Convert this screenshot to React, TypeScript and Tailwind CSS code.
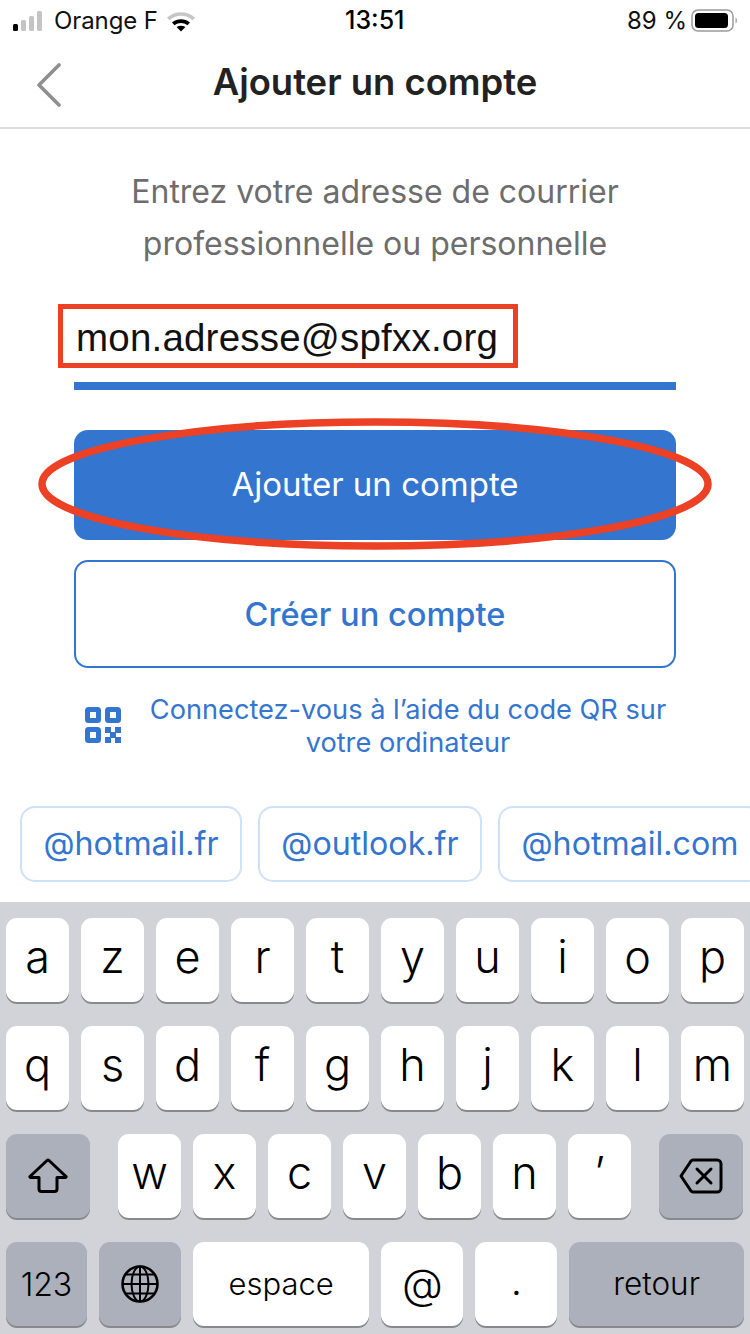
import React from 'react';

const font = "font-['Inter','Liberation_Sans',sans-serif]";

const SignalBars = () => (
  <svg width="36" height="20" viewBox="0 0 36 20" className="block">
    <rect x="0" y="13" width="5" height="7" rx="1.5" fill="#000" />
    <rect x="8" y="9" width="5" height="11" rx="1.5" fill="#c4c4c4" />
    <rect x="16" y="5" width="5" height="15" rx="1.5" fill="#c4c4c4" />
    <rect x="24" y="0" width="5" height="20" rx="1.5" fill="#c4c4c4" />
  </svg>
);

const Wifi = () => (
  <svg width="30" height="22" viewBox="0 0 30 22" className="block">
    <path d="M1 7.5 C9 0.5 21 0.5 29 7.5 L26.4 10.2 C19.5 4.4 10.5 4.4 3.6 10.2 Z" fill="#c6c6c6" />
    <path d="M6 12.6 C11.5 8.2 18.5 8.2 24 12.6 L21.4 15.2 C17.4 12.2 12.6 12.2 8.6 15.2 Z" fill="#000" />
    <path d="M10.6 17 C13.4 15.2 16.6 15.2 19.4 17 L15 21.6 Z" fill="#000" />
  </svg>
);

const Battery = () => (
  <svg width="48" height="24" viewBox="0 0 48 24" className="block">
    <rect x="1" y="1" width="41" height="21" rx="6" fill="none" stroke="#9a9a9a" strokeWidth="1.5" />
    <rect x="4" y="4" width="33" height="15" rx="3.5" fill="#000" />
    <path d="M44.5 8.5 C46.5 9.5 46.5 13.5 44.5 14.5 Z" fill="#a5a5a5" />
  </svg>
);

const QrIcon = () => (
  <svg width="36" height="36" viewBox="0 0 36 36" className="block">
    <g fill="#3375cf">
      <path fillRule="evenodd" d="M3.5 0 H12.5 A3.5 3.5 0 0 1 16 3.5 V12.5 A3.5 3.5 0 0 1 12.5 16 H3.5 A3.5 3.5 0 0 1 0 12.5 V3.5 A3.5 3.5 0 0 1 3.5 0 Z M5 5 V11 H11 V5 Z" />
      <path fillRule="evenodd" d="M23.5 0 H32.5 A3.5 3.5 0 0 1 36 3.5 V12.5 A3.5 3.5 0 0 1 32.5 16 H23.5 A3.5 3.5 0 0 1 20 12.5 V3.5 A3.5 3.5 0 0 1 23.5 0 Z M25 5 V11 H31 V5 Z" />
      <path fillRule="evenodd" d="M3.5 20 H12.5 A3.5 3.5 0 0 1 16 23.5 V32.5 A3.5 3.5 0 0 1 12.5 36 H3.5 A3.5 3.5 0 0 1 0 32.5 V23.5 A3.5 3.5 0 0 1 3.5 20 Z M5 25 V31 H11 V25 Z" />
      <rect x="20" y="20" width="6" height="6" />
      <rect x="30" y="20" width="6" height="6" />
      <rect x="25" y="25" width="6" height="6" />
      <rect x="20" y="30" width="6" height="6" />
      <rect x="30" y="30" width="6" height="6" />
    </g>
  </svg>
);

const ShiftIcon = () => (
  <svg width="42" height="36" viewBox="0 0 42 36" className="block">
    <path d="M20 2.5 a1.5 1.5 0 0 1 2 0 L39 18.5 a0.6 0.6 0 0 1 -0.5 1 H30 V31 a2.5 2.5 0 0 1 -2.5 2.5 H14.5 A2.5 2.5 0 0 1 12 31 V19.5 H3.5 a0.6 0.6 0 0 1 -0.5 -1 Z" fill="none" stroke="#000" strokeWidth="3" strokeLinejoin="round" />
  </svg>
);

const DeleteIcon = () => (
  <svg width="44" height="36" viewBox="0 0 44 36" className="block">
    <path d="M14 2 H38 a4 4 0 0 1 4 4 V30 a4 4 0 0 1 -4 4 H14 a3 3 0 0 1 -2 -1 L2 18 L12 3 a3 3 0 0 1 2 -1 Z" fill="none" stroke="#000" strokeWidth="3" strokeLinejoin="round" />
    <path d="M18 11 L32 25 M32 11 L18 25" fill="none" stroke="#000" strokeWidth="3" strokeLinecap="round" />
  </svg>
);

const GlobeIcon = () => (
  <svg width="38" height="38" viewBox="0 0 38 38" className="block">
    <g fill="none" stroke="#000" strokeWidth="2">
      <circle cx="19" cy="19" r="17.5" strokeWidth="2.6" />
      <ellipse cx="19" cy="19" rx="8.5" ry="17.5" />
      <path d="M19 1.5 V36.5 M1.5 19 H36.5 M4.5 9.5 H33.5 M4.5 28.5 H33.5" />
    </g>
  </svg>
);

interface KeyProps {
  className: string;
  dark?: boolean;
  children: React.ReactNode;
}

const Key: React.FC<KeyProps> = ({ className, dark, children }) => (
  <div
    className={`${className} h-[84px] rounded-[11px] flex items-center justify-center text-black shadow-[0_2px_0_#88898d] ${
      dark ? 'bg-[#abb0ba]' : 'bg-white'
    }`}
  >
    {children}
  </div>
);

const Letter: React.FC<{ c: string }> = ({ c }) => (
  <Key className="w-[63px]">
    <span className="text-[45px] leading-none -mt-[8px] font-light">{c}</span>
  </Key>
);

const chips = [
  { label: '@hotmail.fr', w: 'w-[222px]' },
  { label: '@outlook.fr', w: 'w-[224px]' },
  { label: '@hotmail.com', w: 'w-[264px]' },
];

export default function App() {
  return (
    <div className={`${font} relative w-[750px] h-[1334px] overflow-hidden bg-white flex flex-col`}>
      {/* status bar */}
      <div className="h-[42px] flex items-center pl-[13px] pr-[11px] text-[24px] text-[#111] relative">
        <SignalBars />
        <span className="ml-[5px] -tracking-[0.1px]">Orange F</span>
        <div className="ml-[8px]">
          <Wifi />
        </div>
        <span className="absolute left-[345px] text-[25px] font-medium text-black">13:51</span>
        <span className="ml-auto mr-[4px]">89 %</span>
        <Battery />
      </div>

      {/* nav */}
      <div className="h-[87px] border-b-2 border-[#dddddd] flex items-center justify-center relative">
        <svg width="26" height="44" viewBox="0 0 26 44" className="absolute left-[36px] top-[21px]">
          <path d="M23 2 L3 22 L23 42" fill="none" stroke="#8f8f8f" strokeWidth="3.6" strokeLinecap="round" strokeLinejoin="round" />
        </svg>
        <span className="text-[36.4px] font-semibold text-[#222] -mt-[4px]">Ajouter un compte</span>
      </div>

      {/* form */}
      <div className="px-[74px] flex flex-col">
        <p className="mt-[37px] text-center text-[32px] leading-[52px] text-[#6d6d6d] -mx-[40px]">
          Entrez votre adresse de courrier
          <br />
          professionnelle ou personnelle
        </p>
        <div className="relative h-[120px] border-b-[8px] border-[#3375cf] mb-[40px] text-[38.5px] leading-none text-[#111] flex items-center">
          <span className="ml-[2px] mt-[24px] font-['Liberation_Sans',sans-serif] tracking-[0.2px]">mon.adresse@spfxx.org</span>
          {/* annotation */}
          <div className="absolute -left-[16px] top-[34px] w-[460px] h-[64px] border-[5px] border-[#ec4125]" />
        </div>
        <button className="h-[110px] rounded-[14px] bg-[#3375cf] text-white text-[33px]">Ajouter un compte</button>
        <button className="mt-[20px] h-[108px] rounded-[14px] border-2 border-[#3375cf] bg-white text-[#3375cf] text-[32.6px] font-medium">
          Créer un compte
        </button>
        <div className="mt-[25px] flex items-center">
          <div className="ml-[11px] mr-[19px] shrink-0 -mt-[2px]">
            <QrIcon />
          </div>
          <p className="flex-1 text-center text-[27.2px] leading-[33px] text-[#3375cf] whitespace-nowrap">
            Connectez-vous à l’aide du code QR sur
            <br />
            votre ordinateur
          </p>
        </div>
      </div>

      {/* suggestions */}
      <div className="mt-[47px] flex gap-[16px] pl-[20px] overflow-hidden">
        {chips.map((chip) => (
          <div
            key={chip.label}
            className={`${chip.w} shrink-0 h-[76px] rounded-[15px] border-2 border-[#cfe2f5] flex items-center justify-center text-[32.2px] text-[#3375cf]`}
          >
            {chip.label}
          </div>
        ))}
      </div>

      {/* keyboard */}
      <div className="mt-[20px] flex-1 bg-[#d1d3d9] pt-[16px] pl-[6px] pr-[6px] flex flex-col gap-[24px]">
        <div className="flex gap-[12px]">
          {['a', 'z', 'e', 'r', 't', 'y', 'u', 'i', 'o', 'p'].map((c) => (
            <Letter key={c} c={c} />
          ))}
        </div>
        <div className="flex gap-[12px]">
          {['q', 's', 'd', 'f', 'g', 'h', 'j', 'k', 'l', 'm'].map((c) => (
            <Letter key={c} c={c} />
          ))}
        </div>
        <div className="flex">
          <Key className="w-[84px]" dark>
            <ShiftIcon />
          </Key>
          <div className="ml-[28px] flex gap-[12px]">
            {['w', 'x', 'c', 'v', 'b', 'n', '’'].map((c) => (
              <Letter key={c} c={c} />
            ))}
          </div>
          <Key className="ml-[28px] w-[84px]" dark>
            <DeleteIcon />
          </Key>
        </div>
        <div className="flex gap-[12px]">
          <Key className="w-[81px]" dark>
            <span className="text-[32px] font-light mt-[2px]">123</span>
          </Key>
          <Key className="w-[82px]" dark>
            <GlobeIcon />
          </Key>
          <Key className="w-[177px]">
            <span className="text-[31px] font-light">espace</span>
          </Key>
          <Key className="w-[82px]">
            <span className="text-[42px] font-light leading-none">@</span>
          </Key>
          <Key className="w-[82px]">
            <span className="text-[32px] font-normal">.</span>
          </Key>
          <Key className="w-[175px]" dark>
            <span className="text-[31.5px] font-light">retour</span>
          </Key>
        </div>
      </div>

      {/* annotation oval over the button */}
      <svg width="750" height="140" viewBox="0 0 750 140" className="absolute left-0 top-[414px] pointer-events-none">
        <ellipse cx="375" cy="70" rx="333" ry="62" fill="none" stroke="#ec4125" strokeWidth="7.5" />
      </svg>
    </div>
  );
}
